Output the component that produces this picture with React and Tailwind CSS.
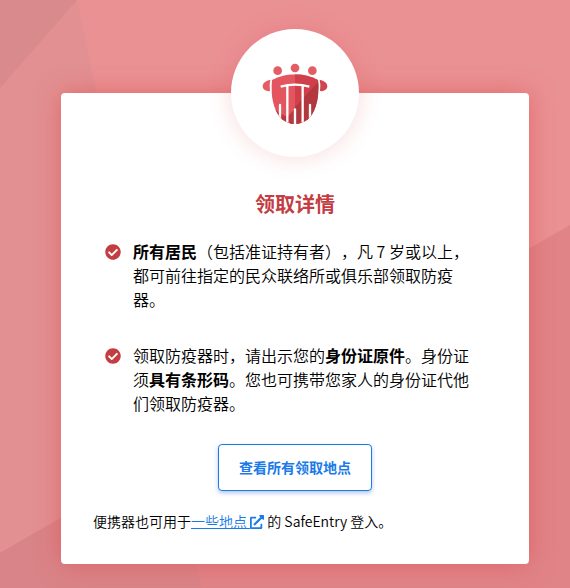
import React from 'react';
import { FaCheckCircle, FaExternalLinkAlt } from 'react-icons/fa';

const Backdrop = () => (
  <svg
    className="absolute inset-0 w-full h-full"
    viewBox="0 0 570 588"
    preserveAspectRatio="none"
    aria-hidden="true"
  >
    <rect width="570" height="588" fill="#ea9194" />
    <path d="M0 0H77L201 588H0Z" fill="#e29092" />
    <path d="M0 0H77L0 88Z" fill="#d98a8c" />
    <path d="M570 225L0 553V588H570Z" fill="#e08488" />
    <path d="M0 553L170 455L201 588H0Z" fill="#d98488" />
  </svg>
);

const Logo = () => (
  <svg width="80" height="75" viewBox="0 0 240 225" aria-hidden="true">
    <defs>
      <clipPath id="shield">
        <path d="M51 72Q83 55 120 55Q157 55 189 72C195 118 183 168 159 190Q141 204 120 204Q99 204 81 190C57 168 45 118 51 72Z" />
      </clipPath>
    </defs>
    {/* people */}
    <g fill="#e45d64">
      <circle cx="68" cy="44" r="13" />
      <circle cx="120" cy="36" r="13" />
      <circle cx="172" cy="44" r="13" />
      <path d="M46 71C32 74 23 81 23 91C23 101 34 107 45 105Q42 88 46 71Z" />
      <path d="M194 71C208 74 217 81 217 91C217 101 206 107 195 105Q198 88 194 71Z" fill="#cf4650" />
    </g>
    {/* body */}
    <g clipPath="url(#shield)">
      <rect x="40" y="45" width="160" height="165" fill="#e4565f" />
      <path d="M120 45H200V90L120 176Z" fill="#d0404a" />
      <path d="M200 66L120 154V210H200Z" fill="#b2373f" />
      <path d="M120 158L94 186L110 210H120Z" fill="#bb3841" />
      <path d="M50 150Q80 184 120 187V210H50Z" fill="#bb3841" />
      <g stroke="#fff" strokeWidth="7" fill="none">
        <path d="M77 92Q120 80 163 92" />
        <path d="M97 88V210M143 88V210" />
        <path d="M75 147V210M120 160V210M165 147V210" strokeLinecap="round" />
      </g>
    </g>
  </svg>
);

const Item = ({ children }) => (
  <li className="flex">
    <FaCheckCircle className="shrink-0 mx-3 mt-[5px] text-[#c33d42]" size={16} />
    <p className="flex-1">{children}</p>
  </li>
);

const App = () => {
  return (
    <div
      className="relative min-h-screen overflow-hidden pt-[93px] pb-6 pl-[61px] pr-[41px] text-black font-[350] font-['Noto_Sans_CJK_SC',sans-serif]"
      lang="zh-CN"
    >
      <Backdrop />

      <main className="relative flow-root rounded bg-white px-8 pb-[33px] shadow-[0_0_24px_rgba(221,72,72,0.55)]">
        <div className="mx-auto -mt-16 w-32 h-32 rounded-full bg-white flex items-center justify-center shadow-[0_0_24px_rgba(221,72,72,0.2)]">
          <Logo />
        </div>

        <h1 className="mt-[35px] text-center text-xl leading-6 font-bold text-[#c33d42]">领取详情</h1>

        <ul className="mt-[23px] pr-4 space-y-8 text-base leading-6 [text-spacing-trim:space-all]">
          <Item>
            <strong className="font-bold">所有居民</strong>（包括准证持有者），凡 7 岁或以上，都可前往指定的民众联络所或俱乐部领取防疫器。
          </Item>
          <Item>
            领取防疫器时，请出示您的<strong className="font-bold">身份证原件</strong>。身份证须<strong className="font-bold">具有条形码</strong>。您也可携带您家人的身份证代他们领取防疫器。
          </Item>
        </ul>

        <div className="mt-[29px] text-center">
          <button
            type="button"
            className="inline-block align-top rounded border border-[#1a7be8] bg-white px-5 py-3 text-sm leading-[21px] font-bold text-[#1a7be8] shadow-[0_2px_4px_rgba(26,90,200,0.35)]"
          >
            查看所有领取地点
          </button>
        </div>

        <p className="mt-5 text-sm leading-5">
          便携器也可用于
          <a href="#locations" className="text-[#1a7be8] underline">
            一些地点 <FaExternalLinkAlt className="inline align-[-2px]" size={14} />
          </a>{' '}
          的 SafeEntry 登入。
        </p>
      </main>
    </div>
  );
};

export default App;
